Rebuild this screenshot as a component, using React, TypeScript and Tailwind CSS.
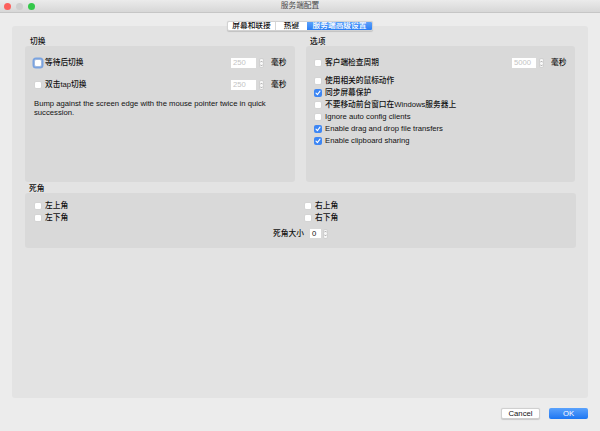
import React from "react";

const FONT = "font-['Liberation_Sans','Noto_Sans_CJK_SC',sans-serif]";

function Checkbox({ checked = false, focus = false }: { checked?: boolean; focus?: boolean }) {
  if (checked) {
    return (
      <span className="flex h-[8px] w-[8px] shrink-0 items-center justify-center rounded-[2px] bg-[#3d86f4]">
        <svg width="6" height="6" viewBox="0 0 6 6">
          <path d="M1 3.2 L2.4 4.6 L5 1.2" fill="none" stroke="#fff" strokeWidth="1.1" strokeLinecap="round" strokeLinejoin="round" />
        </svg>
      </span>
    );
  }
  return (
    <span
      className={
        focus
          ? "h-[8px] w-[8px] shrink-0 rounded-[2px] border border-[#9fb9e0] bg-white ring-[1.5px] ring-[#7aa3e0]"
          : "h-[8px] w-[8px] shrink-0 rounded-[2px] border border-[#d4d4d4] bg-white"
      }
    />
  );
}

function Stepper() {
  return (
    <span className="flex h-[10px] w-[5px] shrink-0 items-center justify-center rounded-[2px] border border-[#d0d0d0] bg-[#f7f7f7]">
      <svg width="3" height="7" viewBox="0 0 3 7">
        <path d="M0.3 2.4 L1.5 1 L2.7 2.4 M0.3 4.6 L1.5 6 L2.7 4.6" fill="none" stroke="#888" strokeWidth="0.6" />
      </svg>
    </span>
  );
}

function SpinRow({ label, value, fieldW, focus }: { label: string; value: string; fieldW: string; focus?: boolean }) {
  return (
    <div className="flex h-[10px] items-center whitespace-nowrap">
      <Checkbox focus={focus} />
      <span className="ml-[3px]">{label}</span>
      <span className={`ml-auto h-[10px] ${fieldW} bg-white pl-[2px] leading-[10px] text-[#c4c4c4]`}>{value}</span>
      <span className="ml-[3px]">
        <Stepper />
      </span>
      <span className="ml-[7px] w-[16px]">毫秒</span>
    </div>
  );
}

function CheckRow({ label, checked }: { label: string; checked?: boolean }) {
  return (
    <div className="flex h-[12px] items-center whitespace-nowrap">
      <Checkbox checked={checked} />
      <span className="ml-[3px]">{label}</span>
    </div>
  );
}

const OPTIONS = [
  { label: "使用相关的鼠标动作", checked: false },
  { label: "同步屏幕保护", checked: true },
  { label: "不要移动前台窗口在Windows服务器上", checked: false },
  { label: "Ignore auto config clients", checked: false },
  { label: "Enable drag and drop file transfers", checked: true },
  { label: "Enable clipboard sharing", checked: true },
];

export default function App() {
  return (
    <div className={`flex h-[431px] w-[600px] flex-col overflow-hidden bg-[#ececec] text-[7.7px] font-medium text-[#111] ${FONT}`}>
      {/* title bar */}
      <div className="relative flex h-[13px] shrink-0 items-center justify-center border-b border-[#c6c6c6] bg-gradient-to-b from-[#ebebeb] to-[#d7d7d7]">
        <div className="absolute left-[4px] top-[3px] flex gap-[5px]">
          <span className="h-[7px] w-[7px] rounded-full bg-[#fc605c]" />
          <span className="h-[7px] w-[7px] rounded-full bg-[#cfcfcf]" />
          <span className="h-[7px] w-[7px] rounded-full bg-[#34c84a]" />
        </div>
        <span className="font-normal text-[#4a4a4a]">服务端配置</span>
      </div>

      {/* tabs */}
      <div className="relative z-10 mt-[8px] flex h-[10px] shrink-0 justify-center">
        <div className="flex h-[10px] overflow-hidden whitespace-nowrap rounded-[2px] border border-[#d2d2d2] bg-white leading-[8px] shadow-[0_0.5px_1px_rgba(0,0,0,0.15)]">
          <span className="flex h-[8px] w-[48px] items-center justify-center border-r border-[#d6d6d6]">屏幕和联接</span>
          <span className="flex h-[8px] w-[31px] items-center justify-center">热键</span>
          <span className="flex h-[8px] w-[65px] items-center justify-center bg-gradient-to-b from-[#5aa0fb] to-[#2a7ef4] text-white">
            服务端高级设置
          </span>
        </div>
      </div>

      {/* panel */}
      <div className="mx-[12px] -mt-[5px] flex min-h-0 flex-1 flex-col rounded-[3px] bg-[#e3e3e3] pl-[13px] pr-[12px] pt-[12px]">
        <div className="flex gap-[11px]">
          <div className="flex w-[270px] flex-col">
            <div className="h-[8px] pl-[5px] leading-[8px]">切换</div>
            <div className="flex h-[136px] flex-col rounded-[3px] bg-[#d9d9d9] pl-[9px] pr-[8px] pt-[12px]">
              <SpinRow label="等待后切换" value="250" fieldW="w-[25px]" focus />
              <div className="mt-[12px]">
                <SpinRow label="双击tap切换" value="250" fieldW="w-[25px]" />
              </div>
              <p className="mt-[10px] leading-[8.5px]">
                Bump against the screen edge with the mouse pointer twice in quick succession.
              </p>
            </div>
          </div>

          <div className="flex w-[269px] flex-col">
            <div className="h-[8px] pl-[4px] leading-[8px]">选项</div>
            <div className="flex h-[136px] flex-col rounded-[3px] bg-[#d9d9d9] pl-[8px] pr-[8px] pt-[12px]">
              <SpinRow label="客户端检查周期" value="5000" fieldW="w-[24px]" />
              <div className="mt-[7px] flex flex-col">
                {OPTIONS.map((o) => (
                  <CheckRow key={o.label} label={o.label} checked={o.checked} />
                ))}
              </div>
            </div>
          </div>
        </div>

        <div className="mt-[3px] h-[8px] pl-[4px] leading-[8px]">死角</div>
        <div className="flex h-[55px] flex-col rounded-[3px] bg-[#d9d9d9] pl-[9px] pt-[7px]">
          <div className="grid grid-cols-[270px_1fr]">
            <CheckRow label="左上角" />
            <CheckRow label="右上角" />
            <CheckRow label="左下角" />
            <CheckRow label="右下角" />
          </div>
          <div className="mt-[5px] flex h-[9px] items-center justify-center whitespace-nowrap pr-[9px]">
            <span>死角大小</span>
            <span className="ml-[6px] h-[9px] w-[11px] bg-white pl-[2px] leading-[9px]">0</span>
            <span className="ml-[2px]">
              <Stepper />
            </span>
          </div>
        </div>
      </div>

      {/* buttons */}
      <div className="mb-[12px] mt-[10px] flex h-[11px] shrink-0 justify-end gap-[9px] pr-[12px]">
        <button className="flex w-[39px] items-center justify-center rounded-[2px] border border-[#d0d0d0] bg-white shadow-[0_0.5px_1px_rgba(0,0,0,0.15)]">
          Cancel
        </button>
        <button className="flex w-[39px] items-center justify-center rounded-[2px] bg-gradient-to-b from-[#5aa2fc] to-[#1b76f2] text-white">
          OK
        </button>
      </div>
    </div>
  );
}
